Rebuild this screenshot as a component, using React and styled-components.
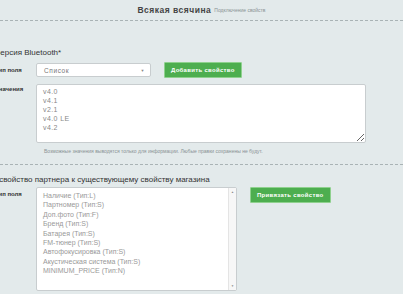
import React from 'react'
import styled, { createGlobalStyle } from 'styled-components'

const GlobalStyle = createGlobalStyle`
  html, body {
    margin: 0;
    padding: 0;
    background: #e3eaeb;
  }
  body {
    font-family: "Liberation Sans", Arial, sans-serif;
    color: #333;
  }
`

const Page = styled.div`
  width: 403px;
  height: 294px;
  overflow: hidden;
`

const Header = styled.header`
  height: 20px;
  overflow: hidden;
  display: flex;
  align-items: center;
  justify-content: center;
  gap: 3px;
  h1 {
    margin: 0;
    font-size: 8.5px;
    font-weight: bold;
    color: #444;
    letter-spacing: 0.5px;
  }
  small {
    font-size: 5px;
    color: #8a9294;
  }
`

const Divider = styled.hr`
  margin: 0;
  border: 0;
  border-top: 1px dashed #a9b3b5;
  height: 0;
`

const Section = styled.section`
  width: 408px;
  margin-left: -5px;
  padding-top: ${(p) => p.$top}px;
  padding-bottom: ${(p) => p.$bottom || 0}px;
`

const Heading = styled.h2`
  margin: 0 0 ${(p) => p.$gap}px ${(p) => p.$indent || 0}px;
  font-size: 8px;
  line-height: 10px;
  font-weight: normal;
  color: #333;
  white-space: nowrap;
`

const Row = styled.div`
  display: flex;
  align-items: ${(p) => p.$align || 'flex-start'};
  margin-bottom: ${(p) => p.$gap || 0}px;
`

const Label = styled.div`
  width: 41px;
  flex-shrink: 0;
  font-size: 6px;
  font-weight: bold;
  color: #333;
  padding-top: ${(p) => p.$pad || 0}px;
  white-space: nowrap;
`

const Controls = styled.div`
  display: flex;
  align-items: ${(p) => p.$align || 'flex-start'};
  gap: 13px;
`

const Select = styled.div`
  width: 115px;
  height: 14px;
  box-sizing: border-box;
  background: #fff;
  border: 1px solid #c8cdcf;
  border-radius: 2px;
  display: flex;
  align-items: center;
  justify-content: space-between;
  padding: 0 5px 0 7px;
  font-size: 6.5px;
  color: #777;
  letter-spacing: 0.6px;
  span {
    font-size: 4px;
    color: #888;
  }
`

const Button = styled.button`
  height: 16px;
  padding: 0 ${(p) => p.$pad}px;
  background: #4dae4f;
  border: 1px solid #8fd18e;
  border-radius: 1px;
  color: #fff;
  font-family: "Liberation Sans", Arial, sans-serif;
  font-size: 6px;
  font-weight: bold;
  letter-spacing: 0.3px;
  white-space: nowrap;
`

const TextArea = styled.textarea`
  width: 330px;
  height: 59px;
  box-sizing: border-box;
  margin: 0;
  padding: 2px 6px;
  background: #fff;
  border: 1px solid #c8cdcf;
  border-radius: 2px;
  font-family: "Liberation Sans", Arial, sans-serif;
  font-size: 7px;
  line-height: 9px;
  color: #888;
  letter-spacing: 0.4px;
  display: block;
  resize: vertical;
`

const Hint = styled.p`
  margin: 5px 0 0 49px;
  font-size: 5px;
  line-height: 6px;
  color: #8a9294;
  white-space: nowrap;
`

const ListBox = styled.div`
  width: 201px;
  height: 104px;
  box-sizing: border-box;
  background: #fff;
  border: 1px solid #c8cdcf;
  border-radius: 2px;
  display: flex;
`

const Options = styled.ul`
  flex: 1;
  margin: 0;
  padding: 3px 6px;
  list-style: none;
  li {
    font-size: 7px;
    line-height: 9.4px;
    color: #999;
    white-space: nowrap;
  }
`

const ScrollBar = styled.div`
  width: 7px;
  border-left: 1px solid #e4e4e4;
  background: #f7f7f7;
  display: flex;
  flex-direction: column;
  justify-content: space-between;
  align-items: center;
  padding: 2px 0;
  font-size: 3px;
  color: #888;
`

const options = [
  'Наличие (Тип:L)',
  'Партномер (Тип:S)',
  'Доп.фото (Тип:F)',
  'Бренд (Тип:S)',
  'Батарея (Тип:S)',
  'FM-тюнер (Тип:S)',
  'Автофокусировка (Тип:S)',
  'Акустическая система (Тип:S)',
  'MINIMUM_PRICE (Тип:N)',
]

export default function App() {
  return (
    <Page>
      <GlobalStyle />
      <Header>
        <h1>Всякая всячина</h1>
        <small>Подключение свойств</small>
      </Header>
      <Divider />

      <Section $top={27} $bottom={10}>
        <Heading $gap={4}>Версия Bluetooth*</Heading>
        <Row $align="center" $gap={6}>
          <Label>Тип поля</Label>
          <Controls $align="center">
            <Select>
              Список
              <span>▼</span>
            </Select>
            <Button $pad={6}>Добавить свойство</Button>
          </Controls>
        </Row>
        <Row>
          <Label $pad={2}>Значения</Label>
          <TextArea readOnly defaultValue={'v4.0\nv4.1\nv2.1\nv4.0 LE\nv4.2'} />
        </Row>
        <Hint>Возможные значения выводятся только для информации. Любые правки сохранены не будут.</Hint>
      </Section>
      <Divider />

      <Section $top={10}>
        <Heading $gap={2} $indent={-37}>Привязать свойство партнера к существующему свойству магазина</Heading>
        <Row>
          <Label $pad={4}>Тип поля</Label>
          <Controls>
            <ListBox>
              <Options>
                {options.map((o) => (
                  <li key={o}>{o}</li>
                ))}
              </Options>
              <ScrollBar>
                <span>▲</span>
                <span>▼</span>
              </ScrollBar>
            </ListBox>
            <Button $pad={6}>Привязать свойство</Button>
          </Controls>
        </Row>
      </Section>
    </Page>
  )
}
